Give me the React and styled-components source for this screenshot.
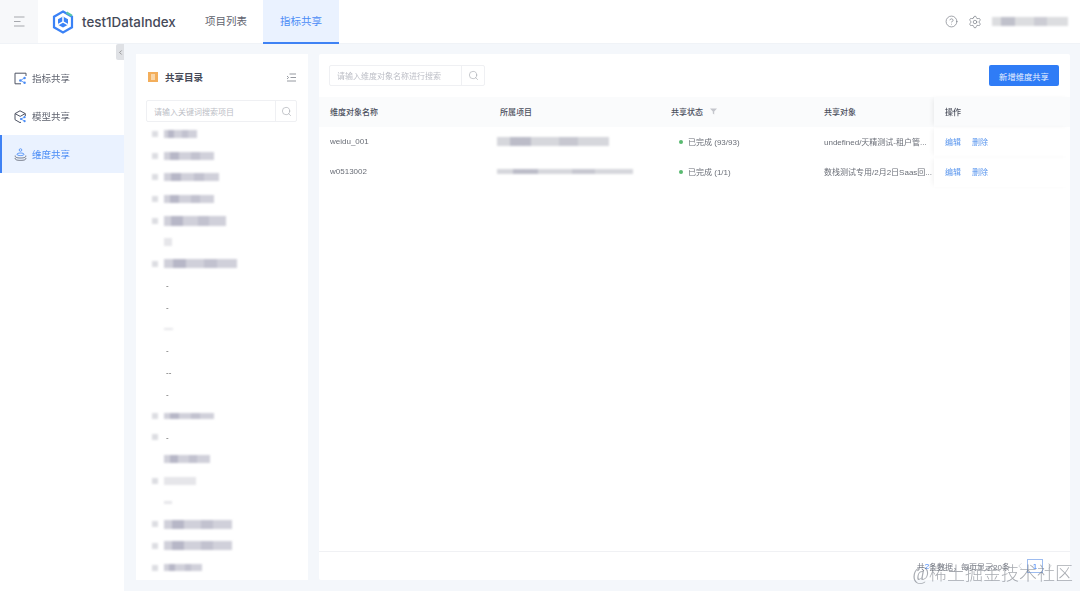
import React from "react";
import styled, { createGlobalStyle } from "styled-components";
import { Search, CircleHelp, Settings, ChevronLeft, ChevronRight } from "lucide-react";

const Global = createGlobalStyle`
  html, body { margin: 0; padding: 0; background: #f4f7fb; }
  body { font-family: "Liberation Sans", "Noto Sans CJK SC", sans-serif; color: #4b4f5c; overflow: hidden; }
  * { box-sizing: border-box; }
`;

const Page = styled.div`
  position: relative;
  width: 1080px;
  height: 591px;
  display: flex;
  flex-direction: column;
  overflow: hidden;
  filter: blur(0.4px);
`;

const Header = styled.header`
  flex: 0 0 44px;
  height: 44px;
  display: flex;
  align-items: stretch;
  background: #fff;
  border-bottom: 1px solid #f0f3f7;
`;
const MenuSquare = styled.div`
  width: 38px;
  background: #f7f8fa;
  display: flex;
  align-items: center;
  justify-content: center;
`;
const Brand = styled.div`
  display: flex;
  align-items: center;
  margin-left: 14px;
  gap: 8px;
  width: 137px;
`;
const BrandName = styled.span`
  font: 500 13.35px "Inter", "Liberation Sans", sans-serif;
  color: #454958;
  white-space: nowrap;
`;
const NavTab = styled.div`
  width: 76px;
  display: flex;
  align-items: center;
  justify-content: center;
  padding-bottom: 1px;
  font-size: 10.5px;
  color: ${(p) => (p.$active ? "#4a8cf6" : "#5f636e")};
  background: ${(p) => (p.$active ? "#eaf2ff" : "transparent")};
  border-bottom: 2px solid ${(p) => (p.$active ? "#3f82f4" : "transparent")};
  margin-bottom: -1px;
  margin-left: -1px;
`;
const HeaderRight = styled.div`
  margin-left: auto;
  display: flex;
  align-items: center;
  gap: 10px;
  padding-right: 12px;
  color: #7b7f88;
`;
const BlurBar = styled.span`
  display: block;
  width: ${(p) => p.$w}px;
  height: ${(p) => p.$h || 8}px;
  background: ${(p) => p.$c || "#c4c5d0"};
  background-image: ${(p) =>
    p.$patchy
      ? "linear-gradient(90deg, transparent 12%, rgba(120,120,150,.28) 12% 30%, transparent 30% 55%, rgba(120,120,150,.16) 55% 72%, transparent 72%)"
      : "none"};
  filter: blur(${(p) => p.$b || 1.3}px);
  flex: none;
`;

const Body = styled.div`
  flex: 1;
  display: flex;
  min-height: 0;
`;
const Side = styled.nav`
  position: relative;
  width: 124px;
  background: #fff;
  padding-top: 15px;
  flex: none;
`;
const Collapse = styled.div`
  position: absolute;
  right: 0;
  top: 0;
  width: 8px;
  height: 16px;
  background: #dfe1e5;
  border-radius: 2px 0 0 2px;
  display: flex;
  align-items: center;
  justify-content: center;
  color: #666;
`;
const SideItem = styled.div`
  height: 38px;
  display: flex;
  align-items: center;
  gap: 5px;
  padding-left: ${(p) => (p.$active ? "12px" : "14px")};
  font-size: 9.5px;
  color: ${(p) => (p.$active ? "#4a8cf6" : "#5f636f")};
  background: ${(p) => (p.$active ? "#eaf2ff" : "transparent")};
  border-left: ${(p) => (p.$active ? "2.5px solid #3f82f4" : "none")};
`;

const Content = styled.main`
  flex: 1;
  display: flex;
  gap: 11px;
  padding: 10px 10px 11px 12px;
  min-width: 0;
`;
const TreePanel = styled.section`
  width: 172px;
  background: #fff;
  padding: 0 10px;
  flex: none;
`;
const TreeTitleRow = styled.div`
  height: 46px;
  display: flex;
  align-items: center;
  padding: 0 2px;
  gap: 7px;
  font-size: 9.5px;
  font-weight: 700;
  color: #454957;
`;
const FolderMark = styled.span`
  width: 10px;
  height: 10px;
  background: #f3ae5b;
  display: flex;
  align-items: center;
  justify-content: center;
`;
const ListIcon = styled.span`
  margin-left: auto;
  display: flex;
`;
const SearchBox = styled.div`
  display: flex;
  height: ${(p) => (p.$tall ? 22 : 21)}px;
  width: ${(p) => p.$w}px;
  border: 1px solid #eff0f3;
  border-radius: 2px;
  background: #fff;
  margin-bottom: ${(p) => (p.$tall ? "1px" : 0)};
`;
const SearchHint = styled.div`
  flex: 1;
  padding-left: 7px;
  font-size: 8px;
  color: #bcbec6;
  display: flex;
  align-items: center;
  white-space: nowrap;
`;
const SearchBtn = styled.div`
  width: ${(p) => p.$w}px;
  border-left: 1px solid #eff0f3;
  display: flex;
  align-items: center;
  justify-content: center;
  color: #9a9da5;
`;
const TreeList = styled.div`
  display: flex;
  flex-direction: column;
`;
const TreeRow = styled.div`
  height: 21.7px;
  display: flex;
  align-items: center;
  padding-left: 6px;
  gap: 6px;
`;
const Bullet = styled.span`
  width: 6px;
  height: 6px;
  background: #dcdde2;
  filter: blur(1px);
  visibility: ${(p) => (p.$hide ? "hidden" : "visible")};
  flex: none;
`;
const Dash = styled.span`
  font-size: 8px;
  color: #555;
  margin-left: 2px;
`;

const MainPanel = styled.section`
  flex: 1;
  background: #fff;
  border-radius: 2px;
  display: flex;
  flex-direction: column;
  min-width: 0;
`;
const Toolbar = styled.div`
  height: 43px;
  display: flex;
  align-items: center;
  justify-content: space-between;
  padding: 0 11px 0 10px;
`;
const PrimaryBtn = styled.button`
  width: 70px;
  height: 21px;
  border: none;
  border-radius: 2px;
  background: #2f7cf6;
  color: #e6effe;
  font: 8.3px "Noto Sans CJK SC", sans-serif;
  padding: 0;
`;
const TableGrid = styled.div`
  display: grid;
  grid-template-columns: 170px 171px 153px 121px 136px;
  grid-auto-rows: 30px;
`;
const HeadCell = styled.div`
  background: #fafbfc;
  display: flex;
  align-items: center;
  gap: 7px;
  padding: 0 0 2px 11px;
  font-size: 8px;
  font-weight: 500;
  color: #4b4f5c;
  ${(p) => p.$fixed && "box-shadow: -3px 0 5px -2px rgba(0,0,0,.08); position: relative;"}
`;
const Cell = styled.div`
  display: flex;
  align-items: center;
  padding: 0 0 1px ${(p) => p.$pad ?? 11}px;
  gap: 11px;
  font-size: 8px;
  color: #6a6e77;
  white-space: nowrap;
  overflow: hidden;
  ${(p) => p.$fixed && "box-shadow: -3px 0 5px -2px rgba(0,0,0,.06); position: relative;"}
`;
const Dot = styled.span`
  width: 4px;
  height: 4px;
  border-radius: 50%;
  background: #58b96f;
  margin-right: 5px;
  flex: none;
`;
const Status = styled.span`
  display: flex;
  align-items: center;
`;
const LinkAct = styled.span`
  color: #5a96ee;
`;
const Spacer = styled.div`
  flex: 1;
`;
const Footer = styled.div`
  height: 29px;
  border-top: 1px solid #f0f1f4;
  display: flex;
  align-items: center;
  justify-content: flex-end;
  padding-right: 15px;
  font-size: 8px;
  color: #787c86;
`;
const PageNum = styled.span`
  width: 16px;
  height: 14px;
  border: 1px solid #9dbcf0;
  color: #3f82f4;
  display: flex;
  align-items: center;
  justify-content: center;
  margin: 0 1px;
`;
const PagerIcon = styled.span`
  display: flex;
  margin: 0 1px 0 5px;
  color: #9a9da5;
`;
const PagerNext = styled(PagerIcon)`
  margin: 0 0 0 1px;
`;
const Blue = styled.span`
  color: #3f82f4;
`;
const Watermark = styled.div`
  position: absolute;
  right: 7px;
  bottom: 6px;
  font: 300 18px "Liberation Serif", "Noto Sans CJK SC", serif;
  color: rgba(105, 110, 120, 0.58);
  white-space: nowrap;
  line-height: 22px;
`;

const Logo = () => (
  <svg width="22" height="24" viewBox="0 0 22 24" fill="none">
    <path d="M11 1.5 20 6.7v10.6L11 22.5 2 17.3V6.7Z" stroke="#3b82f6" strokeWidth="2.2" />
    <path d="M14.5 2.5 19.8 5.8" stroke="#57c6a8" strokeWidth="2.2" />
    <path d="M11 6.4 16 9.3v5.4L11 17.6l-5-2.9V9.3Z" fill="#3b82f6" />
    <path d="M11 11.8V6.6M11 11.8l-4.8 2.8M11 11.8l4.8 2.8" stroke="#fff" strokeWidth="1.5" />
  </svg>
);
const MenuIcon = () => (
  <svg width="12" height="11" viewBox="0 0 12 11" fill="none" stroke="#a6a8ad" strokeWidth="1">
    <path d="M1 1h10.5M1 5.5h6.5M1 10h10.5" />
  </svg>
);
const ChartShare = () => (
  <svg width="13" height="13" viewBox="0 0 13 13" fill="none">
    <path d="M12 4V1.2H1v10.6h6" stroke="#4f5464" strokeWidth="1" />
    <path d="M6.5 8.5 10.5 6M6.5 8.5l4 2.2" stroke="#4a8cf6" strokeWidth=".8" />
    <circle cx="6.3" cy="8.5" r="1.2" fill="#4a8cf6" />
    <circle cx="10.6" cy="6" r="1.2" fill="#4a8cf6" />
    <circle cx="10.6" cy="10.8" r="1.2" fill="#4a8cf6" />
  </svg>
);
const CubeShare = () => (
  <svg width="13" height="13" viewBox="0 0 13 13" fill="none">
    <path d="M6 .8 11.3 3.6V6M7 12.2 6 12.6 1 9.7V3.6L6 .8M1 3.6l5.2 2.8 5-2.8" stroke="#4f5464" strokeWidth="1" />
    <path d="M7 9 10.5 7.2M7 9l3.5 2" stroke="#4a8cf6" strokeWidth=".8" />
    <circle cx="7" cy="9" r="1.1" fill="#4a8cf6" />
    <circle cx="10.6" cy="7.2" r="1.1" fill="#4a8cf6" />
    <circle cx="10.6" cy="11.2" r="1.1" fill="#4a8cf6" />
  </svg>
);
const Stack = () => (
  <svg width="13" height="13" viewBox="0 0 13 13" fill="none">
    <circle cx="6.5" cy="2" r="1.3" stroke="#4a8cf6" strokeWidth=".8" />
    <path d="M3 6.3C3 4.6 10 4.6 10 6.3 10 8 3 8 3 6.3Z" stroke="#4a8cf6" strokeWidth=".9" />
    <path d="M1.2 7.6C.7 9.4 3.4 10 6.5 10s5.8-.6 5.3-2.4M1.2 10c-.5 1.8 2.2 2.4 5.3 2.4s5.8-.6 5.3-2.4" stroke="#5f6472" strokeWidth=".9" />
  </svg>
);
const Lines = () => (
  <svg width="9" height="9" viewBox="0 0 9 9" fill="none" stroke="#8b8e96" strokeWidth=".9">
    <path d="M2.5 1H9M3.5 4.5H9M0 8h9M0 3l1.6 1.5L0 6" />
  </svg>
);
const FilterIcon = () => (
  <svg width="7" height="7" viewBox="0 0 7 7"><path d="M0 .5h7L4.2 3.6V6.5L2.8 5.6v-2Z" fill="#c4c6cc" /></svg>
);

const tree = [
  { w: 33 }, { w: 50 }, { w: 55 }, { w: 50 }, { w: 62, h: 10 },
  { w: 8, faint: true, noBullet: true },
  { w: 73, h: 9 },
  { dash: "-" }, { dash: "-" }, { w: 9, h: 2, faint: true, noBullet: true }, { dash: "-" }, { dash: "--" }, { dash: "-" },
  { w: 50, h: 6 }, { dash: "-", bullet: true },
  { w: 46, h: 8, noBullet: true },
  { w: 32, h: 8, faint: true },
  { w: 8, h: 3, faint: true, noBullet: true },
  { w: 68, h: 9 }, { w: 68, h: 9 }, { w: 38, h: 7 },
];

const rows = [
  { name: "weidu_001", w: 112, status: "已完成 (93/93)", target: "undefined/天精测试-租户管..." },
  { name: "w0513002", w: 136, status: "已完成 (1/1)", target: "数栈测试专用/2月2日Saas回..." },
];

export default function App() {
  return (
    <Page>
      <Global />
      <Header>
        <MenuSquare><MenuIcon /></MenuSquare>
        <Brand><Logo /><BrandName>test1DataIndex</BrandName></Brand>
        <NavTab>项目列表</NavTab>
        <NavTab $active>指标共享</NavTab>
        <HeaderRight>
          <CircleHelp size={13} strokeWidth={1.3} />
          <Settings size={14} strokeWidth={1.2} />
          <BlurBar $w={76} $h={9} $c="#dcdde0" $patchy />
        </HeaderRight>
      </Header>
      <Body>
        <Side>
          <Collapse><ChevronLeft size={7} /></Collapse>
          <SideItem><ChartShare />指标共享</SideItem>
          <SideItem><CubeShare />模型共享</SideItem>
          <SideItem $active><Stack />维度共享</SideItem>
        </Side>
        <Content>
          <TreePanel>
            <TreeTitleRow>
              <FolderMark><BlurBar $w={4} $h={6} $c="#f9d6a8" $b={0.4} /></FolderMark>
              共享目录
              <ListIcon><Lines /></ListIcon>
            </TreeTitleRow>
            <SearchBox $tall $w={151}>
              <SearchHint>请输入关键词搜索项目</SearchHint>
              <SearchBtn $w={21}><Search size={11} strokeWidth={1.2} /></SearchBtn>
            </SearchBox>
            <TreeList>
              {tree.map((r, i) => (
                <TreeRow key={i}>
                  <Bullet $hide={r.noBullet || (r.dash && !r.bullet)} />
                  {r.dash ? (
                    <Dash>{r.dash}</Dash>
                  ) : (
                    <BlurBar $w={r.w} $h={r.h || 8} $c={r.faint ? "#e6e6ea" : "#d0d0da"} $patchy={!r.faint} />
                  )}
                </TreeRow>
              ))}
            </TreeList>
          </TreePanel>
          <MainPanel>
            <Toolbar>
              <SearchBox $w={156}>
                <SearchHint>请输入维度对象名称进行搜索</SearchHint>
                <SearchBtn $w={23}><Search size={11} strokeWidth={1.2} /></SearchBtn>
              </SearchBox>
              <PrimaryBtn>新增维度共享</PrimaryBtn>
            </Toolbar>
            <TableGrid>
              <HeadCell>维度对象名称</HeadCell>
              <HeadCell>所属项目</HeadCell>
              <HeadCell>共享状态<FilterIcon /></HeadCell>
              <HeadCell>共享对象</HeadCell>
              <HeadCell $fixed>操作</HeadCell>
              {rows.map((r) => (
                <React.Fragment key={r.name}>
                  <Cell>{r.name}</Cell>
                  <Cell $pad={8}><BlurBar $w={r.w} $h={r.name === "weidu_001" ? 9 : 5} $c="#d6d7dc" $patchy /></Cell>
                  <Cell $pad={19}><Status><Dot />{r.status}</Status></Cell>
                  <Cell>{r.target}</Cell>
                  <Cell $fixed><LinkAct>编辑</LinkAct><LinkAct>删除</LinkAct></Cell>
                </React.Fragment>
              ))}
            </TableGrid>
            <Spacer />
            <Footer>
              共<Blue>2</Blue>条数据，每页显示20条
              <PagerIcon><ChevronLeft size={10} strokeWidth={1} /></PagerIcon>
              <PageNum>1</PageNum>
              <PagerNext><ChevronRight size={10} strokeWidth={1} /></PagerNext>
            </Footer>
          </MainPanel>
        </Content>
      </Body>
      <Watermark>@稀土掘金技术社区</Watermark>
    </Page>
  );
}
